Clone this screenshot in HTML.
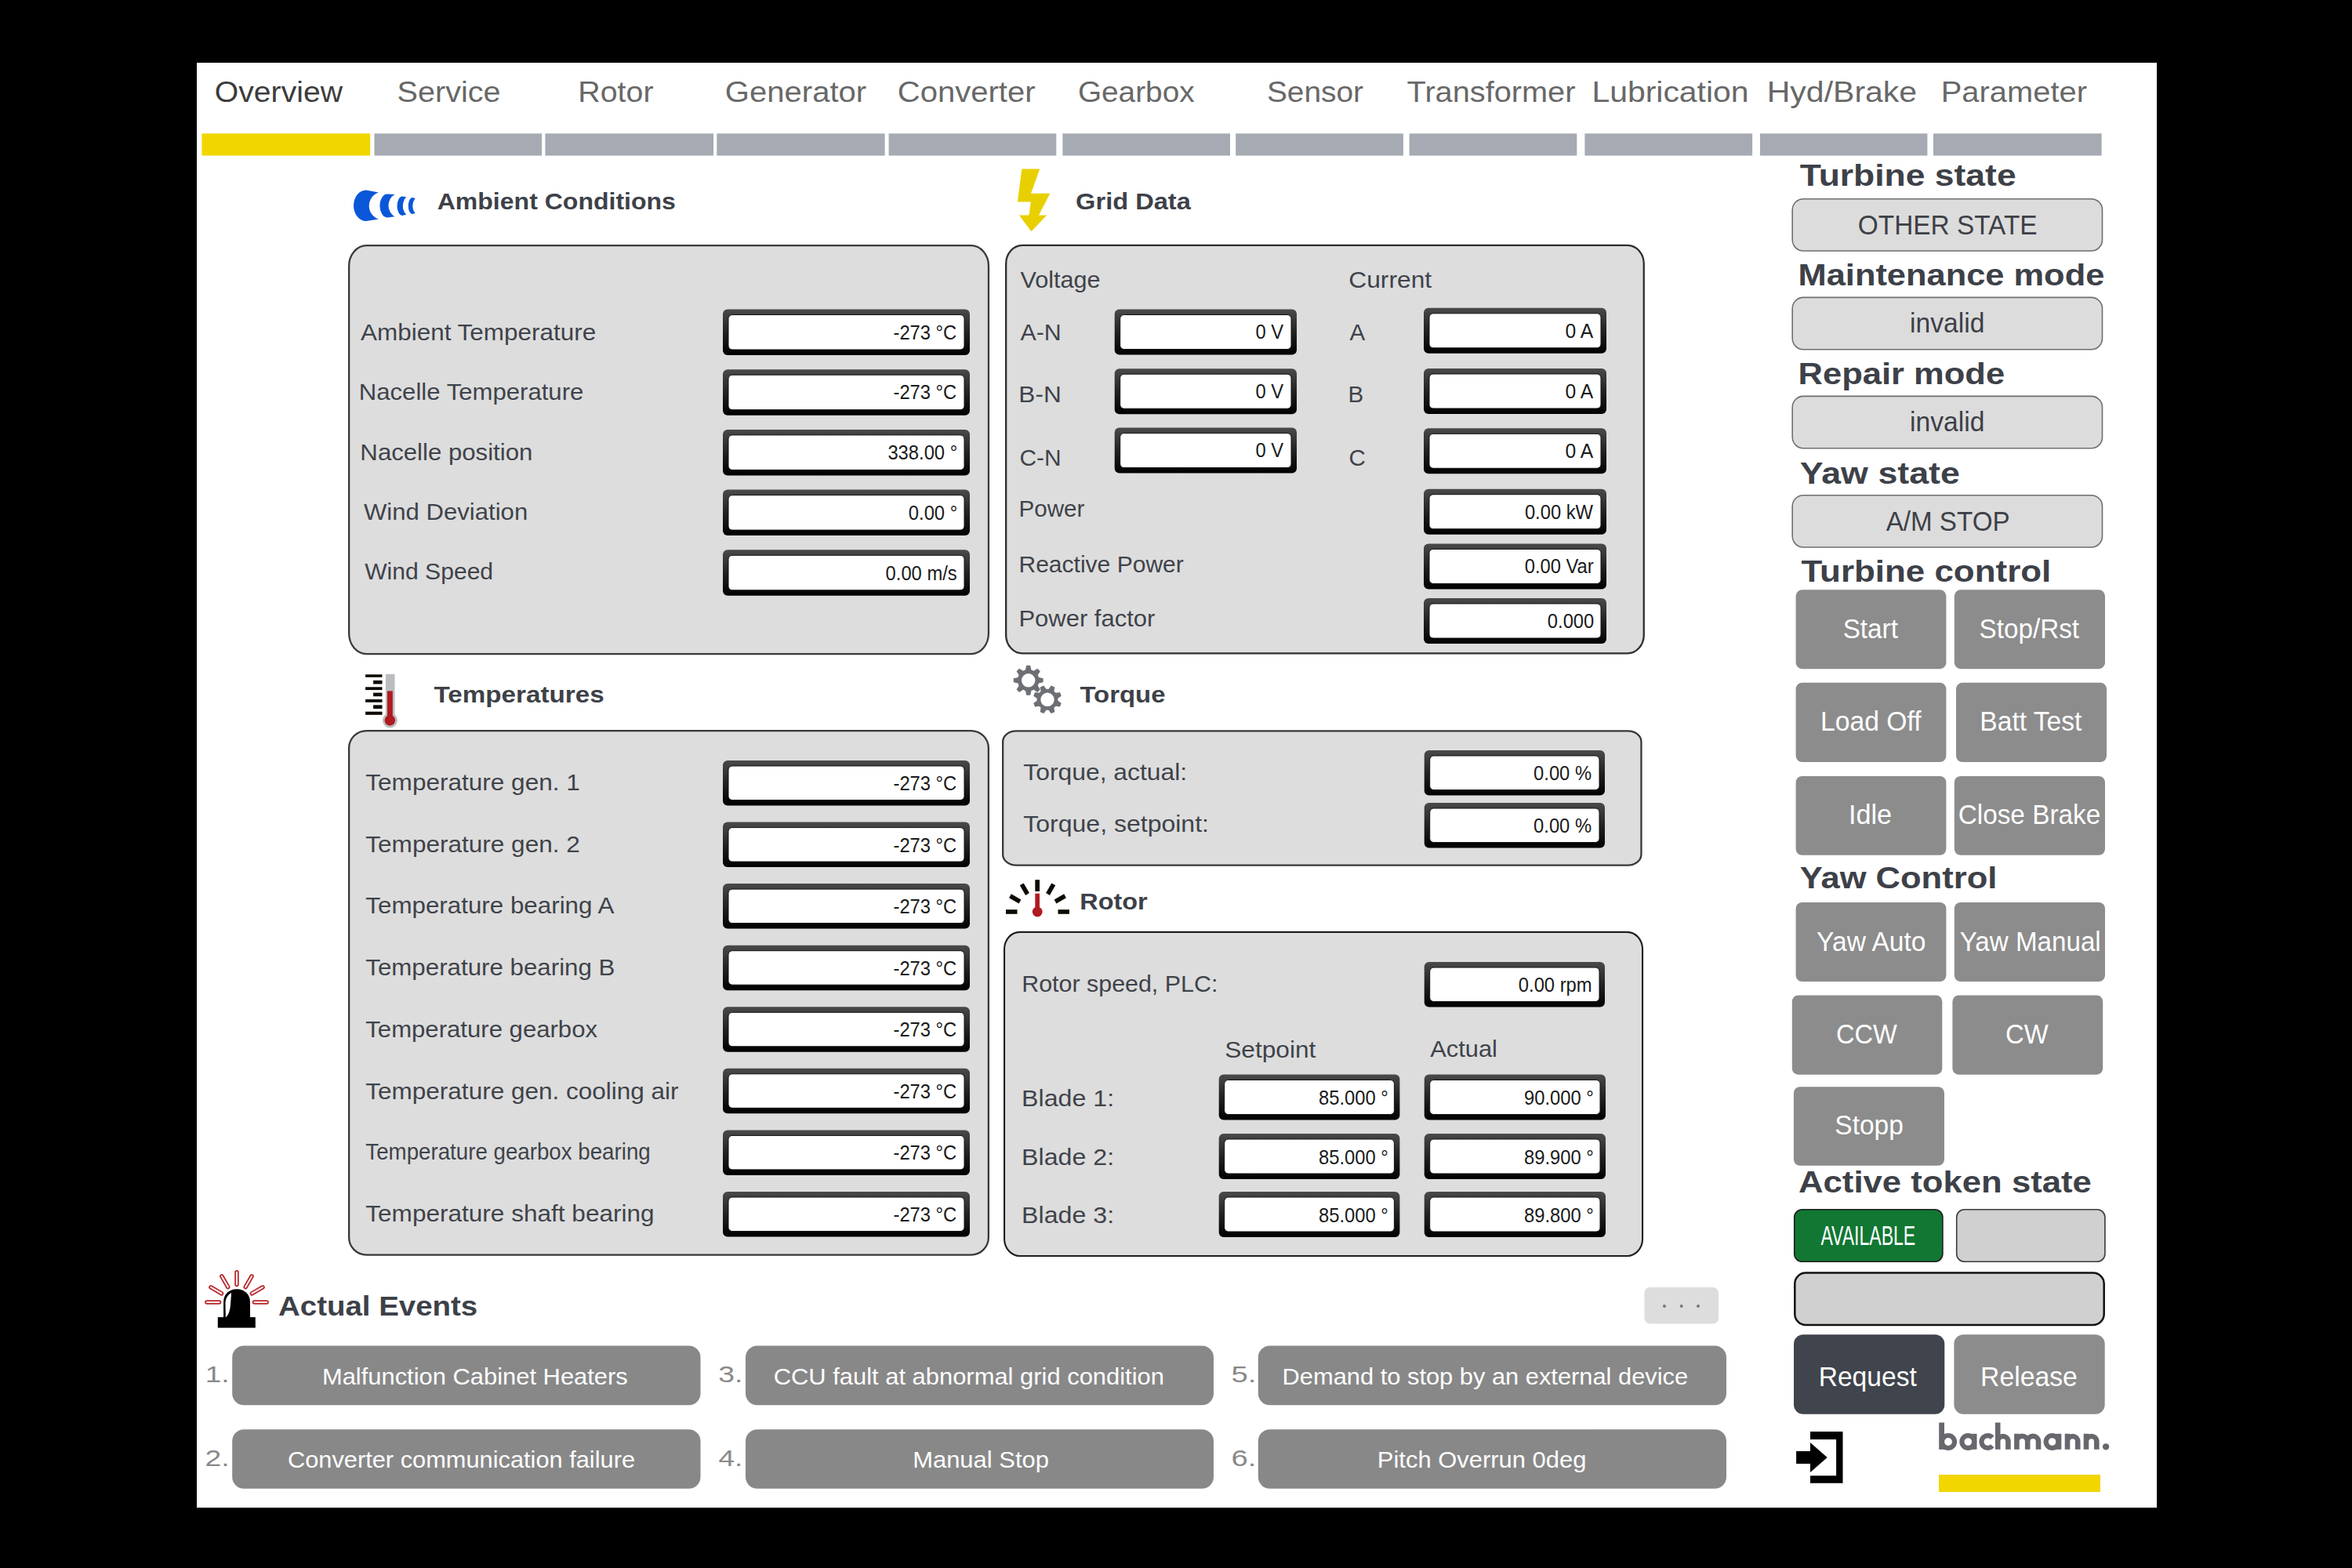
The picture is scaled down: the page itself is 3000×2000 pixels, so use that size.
<!DOCTYPE html>
<html><head><meta charset="utf-8"><style>
html,body{margin:0;padding:0;background:#000;width:3000px;height:2000px;overflow:hidden}
svg{display:block}
text{font-family:"Liberation Sans", sans-serif}
</style></head><body>
<svg width="3000" height="2000" viewBox="0 0 3000 2000">
<defs><linearGradient id="vb" x1="0" y1="0" x2="0" y2="1"><stop offset="0" stop-color="#4a4a4a"/><stop offset="0.5" stop-color="#222"/><stop offset="1" stop-color="#000"/></linearGradient></defs>
<rect x="251" y="80" width="2500" height="1843" fill="#fff"/>
<rect x="257.4" y="170.3" width="214.8" height="28.2" fill="#f2d600"/>
<rect x="477.5" y="170.3" width="213.6" height="28.2" fill="#a6aab2"/>
<rect x="695.4" y="170.3" width="214.6" height="28.2" fill="#a6aab2"/>
<rect x="914.3" y="170.3" width="214.3" height="28.2" fill="#a6aab2"/>
<rect x="1133.6" y="170.3" width="213.7" height="28.2" fill="#a6aab2"/>
<rect x="1355.4" y="170.3" width="213.6" height="28.2" fill="#a6aab2"/>
<rect x="1576.2" y="170.3" width="213.7" height="28.2" fill="#a6aab2"/>
<rect x="1797.6" y="170.3" width="213.7" height="28.2" fill="#a6aab2"/>
<rect x="2021.4" y="170.3" width="213.7" height="28.2" fill="#a6aab2"/>
<rect x="2245.0" y="170.3" width="213.4" height="28.2" fill="#a6aab2"/>
<rect x="2466.0" y="170.3" width="214.6" height="28.2" fill="#a6aab2"/>
<rect x="445.15" y="313.15" width="815.80" height="520.90" rx="22.5" ry="26" fill="#dddddd" stroke="#3a3a3a" stroke-width="2.3"/>
<rect x="1283.15" y="312.95" width="813.60" height="520.50" rx="21" ry="23.5" fill="#dddddd" stroke="#2e2e2e" stroke-width="2.3"/>
<rect x="445.15" y="932.05" width="815.70" height="668.50" rx="22.3" ry="22" fill="#dddddd" stroke="#383838" stroke-width="2.3"/>
<rect x="1279.15" y="932.40" width="814.30" height="171.15" rx="17" ry="13.5" fill="#dddddd" stroke="#383838" stroke-width="2.3"/>
<rect x="1281.05" y="1188.85" width="814.00" height="413.10" rx="19.5" ry="22" fill="#dddddd" stroke="#1e1e1e" stroke-width="2.1"/>
<rect x="922.0" y="394.5" width="315.0" height="58.5" rx="6" fill="url(#vb)"/><rect x="929.0" y="401.5" width="301.0" height="44.5" rx="5" fill="#fff" stroke="#111" stroke-width="1"/>
<rect x="922.0" y="471.2" width="315.0" height="58.5" rx="6" fill="url(#vb)"/><rect x="929.0" y="478.2" width="301.0" height="44.5" rx="5" fill="#fff" stroke="#111" stroke-width="1"/>
<rect x="922.0" y="547.9" width="315.0" height="58.5" rx="6" fill="url(#vb)"/><rect x="929.0" y="554.9" width="301.0" height="44.5" rx="5" fill="#fff" stroke="#111" stroke-width="1"/>
<rect x="922.0" y="624.6" width="315.0" height="58.5" rx="6" fill="url(#vb)"/><rect x="929.0" y="631.6" width="301.0" height="44.5" rx="5" fill="#fff" stroke="#111" stroke-width="1"/>
<rect x="922.0" y="701.3" width="315.0" height="58.5" rx="6" fill="url(#vb)"/><rect x="929.0" y="708.3" width="301.0" height="44.5" rx="5" fill="#fff" stroke="#111" stroke-width="1"/>
<rect x="1421.7" y="394.5" width="232.3" height="58.0" rx="6" fill="url(#vb)"/><rect x="1428.7" y="401.5" width="218.3" height="44.0" rx="5" fill="#fff" stroke="#111" stroke-width="1"/>
<rect x="1421.7" y="470.2" width="232.3" height="58.0" rx="6" fill="url(#vb)"/><rect x="1428.7" y="477.2" width="218.3" height="44.0" rx="5" fill="#fff" stroke="#111" stroke-width="1"/>
<rect x="1421.7" y="545.6" width="232.3" height="58.0" rx="6" fill="url(#vb)"/><rect x="1428.7" y="552.6" width="218.3" height="44.0" rx="5" fill="#fff" stroke="#111" stroke-width="1"/>
<rect x="1816.0" y="392.8" width="233.0" height="58.0" rx="6" fill="url(#vb)"/><rect x="1823.0" y="399.8" width="219.0" height="44.0" rx="5" fill="#fff" stroke="#111" stroke-width="1"/>
<rect x="1816.0" y="470.0" width="233.0" height="58.0" rx="6" fill="url(#vb)"/><rect x="1823.0" y="477.0" width="219.0" height="44.0" rx="5" fill="#fff" stroke="#111" stroke-width="1"/>
<rect x="1816.0" y="546.3" width="233.0" height="58.0" rx="6" fill="url(#vb)"/><rect x="1823.0" y="553.3" width="219.0" height="44.0" rx="5" fill="#fff" stroke="#111" stroke-width="1"/>
<rect x="1816.0" y="623.7" width="233.0" height="58.0" rx="6" fill="url(#vb)"/><rect x="1823.0" y="630.7" width="219.0" height="44.0" rx="5" fill="#fff" stroke="#111" stroke-width="1"/>
<rect x="1816.0" y="693.4" width="233.0" height="58.0" rx="6" fill="url(#vb)"/><rect x="1823.0" y="700.4" width="219.0" height="44.0" rx="5" fill="#fff" stroke="#111" stroke-width="1"/>
<rect x="1816.0" y="763.0" width="233.0" height="58.0" rx="6" fill="url(#vb)"/><rect x="1823.0" y="770.0" width="219.0" height="44.0" rx="5" fill="#fff" stroke="#111" stroke-width="1"/>
<rect x="922.0" y="970.0" width="315.0" height="57.5" rx="6" fill="url(#vb)"/><rect x="929.0" y="977.0" width="301.0" height="43.5" rx="5" fill="#fff" stroke="#111" stroke-width="1"/>
<rect x="922.0" y="1048.6" width="315.0" height="57.5" rx="6" fill="url(#vb)"/><rect x="929.0" y="1055.6" width="301.0" height="43.5" rx="5" fill="#fff" stroke="#111" stroke-width="1"/>
<rect x="922.0" y="1127.1" width="315.0" height="57.5" rx="6" fill="url(#vb)"/><rect x="929.0" y="1134.1" width="301.0" height="43.5" rx="5" fill="#fff" stroke="#111" stroke-width="1"/>
<rect x="922.0" y="1205.7" width="315.0" height="57.5" rx="6" fill="url(#vb)"/><rect x="929.0" y="1212.7" width="301.0" height="43.5" rx="5" fill="#fff" stroke="#111" stroke-width="1"/>
<rect x="922.0" y="1284.3" width="315.0" height="57.5" rx="6" fill="url(#vb)"/><rect x="929.0" y="1291.3" width="301.0" height="43.5" rx="5" fill="#fff" stroke="#111" stroke-width="1"/>
<rect x="922.0" y="1362.8" width="315.0" height="57.5" rx="6" fill="url(#vb)"/><rect x="929.0" y="1369.8" width="301.0" height="43.5" rx="5" fill="#fff" stroke="#111" stroke-width="1"/>
<rect x="922.0" y="1441.4" width="315.0" height="57.5" rx="6" fill="url(#vb)"/><rect x="929.0" y="1448.4" width="301.0" height="43.5" rx="5" fill="#fff" stroke="#111" stroke-width="1"/>
<rect x="922.0" y="1520.0" width="315.0" height="57.5" rx="6" fill="url(#vb)"/><rect x="929.0" y="1527.0" width="301.0" height="43.5" rx="5" fill="#fff" stroke="#111" stroke-width="1"/>
<rect x="1816.7" y="957.0" width="230.3" height="57.5" rx="6" fill="url(#vb)"/><rect x="1823.7" y="964.0" width="216.3" height="43.5" rx="5" fill="#fff" stroke="#111" stroke-width="1"/>
<rect x="1816.7" y="1024.0" width="230.3" height="57.5" rx="6" fill="url(#vb)"/><rect x="1823.7" y="1031.0" width="216.3" height="43.5" rx="5" fill="#fff" stroke="#111" stroke-width="1"/>
<rect x="1816.7" y="1227.0" width="230.3" height="57.5" rx="6" fill="url(#vb)"/><rect x="1823.7" y="1234.0" width="216.3" height="43.5" rx="5" fill="#fff" stroke="#111" stroke-width="1"/>
<rect x="1554.7" y="1370.5" width="230.7" height="58.0" rx="6" fill="url(#vb)"/><rect x="1561.7" y="1377.5" width="216.7" height="44.0" rx="5" fill="#fff" stroke="#111" stroke-width="1"/>
<rect x="1816.7" y="1370.5" width="231.3" height="58.0" rx="6" fill="url(#vb)"/><rect x="1823.7" y="1377.5" width="217.3" height="44.0" rx="5" fill="#fff" stroke="#111" stroke-width="1"/>
<rect x="1554.7" y="1446.0" width="230.7" height="58.0" rx="6" fill="url(#vb)"/><rect x="1561.7" y="1453.0" width="216.7" height="44.0" rx="5" fill="#fff" stroke="#111" stroke-width="1"/>
<rect x="1816.7" y="1446.0" width="231.3" height="58.0" rx="6" fill="url(#vb)"/><rect x="1823.7" y="1453.0" width="217.3" height="44.0" rx="5" fill="#fff" stroke="#111" stroke-width="1"/>
<rect x="1554.7" y="1520.0" width="230.7" height="58.0" rx="6" fill="url(#vb)"/><rect x="1561.7" y="1527.0" width="216.7" height="44.0" rx="5" fill="#fff" stroke="#111" stroke-width="1"/>
<rect x="1816.7" y="1520.0" width="231.3" height="58.0" rx="6" fill="url(#vb)"/><rect x="1823.7" y="1527.0" width="217.3" height="44.0" rx="5" fill="#fff" stroke="#111" stroke-width="1"/>
<rect x="2286.2" y="253.7" width="395.3" height="66.3" rx="14" fill="#dcdcdc" stroke="#6e6e6e" stroke-width="1.6"/>
<rect x="2286.2" y="379.4" width="395.3" height="66.3" rx="14" fill="#dcdcdc" stroke="#6e6e6e" stroke-width="1.6"/>
<rect x="2286.2" y="505.4" width="395.3" height="66.3" rx="14" fill="#dcdcdc" stroke="#6e6e6e" stroke-width="1.6"/>
<rect x="2286.2" y="631.7" width="395.3" height="66.3" rx="14" fill="#dcdcdc" stroke="#6e6e6e" stroke-width="1.6"/>
<rect x="2290.6" y="752.3" width="191.8" height="100.9" rx="8" fill="#8c8c8c"/>
<rect x="2492.8" y="752.3" width="192.2" height="100.9" rx="8" fill="#8c8c8c"/>
<rect x="2290.6" y="870.8" width="191.8" height="101.2" rx="8" fill="#8c8c8c"/>
<rect x="2495.0" y="870.8" width="192.0" height="101.2" rx="8" fill="#8c8c8c"/>
<rect x="2290.6" y="990.0" width="191.8" height="100.8" rx="8" fill="#8c8c8c"/>
<rect x="2492.8" y="990.0" width="192.2" height="100.8" rx="8" fill="#8c8c8c"/>
<rect x="2290.6" y="1151.0" width="191.8" height="101.0" rx="8" fill="#8c8c8c"/>
<rect x="2492.8" y="1151.0" width="192.2" height="101.0" rx="8" fill="#8c8c8c"/>
<rect x="2285.8" y="1269.5" width="191.5" height="101.2" rx="8" fill="#8c8c8c"/>
<rect x="2490.4" y="1269.5" width="191.8" height="101.2" rx="8" fill="#8c8c8c"/>
<rect x="2287.9" y="1386.2" width="192.1" height="100.6" rx="8" fill="#8c8c8c"/>
<rect x="2288.7" y="1542.7" width="189.2" height="66.6" rx="10" fill="#117733" stroke="#1e1e1e" stroke-width="1.6"/>
<rect x="2495.7" y="1542.7" width="189.2" height="66.6" rx="10" fill="#d0d0d0" stroke="#3a3a3a" stroke-width="1.6"/>
<rect x="2289.3" y="1623.5" width="394.4" height="66.4" rx="14" fill="#d0d0d0" stroke="#111" stroke-width="2.5"/>
<rect x="2288.0" y="1702.3" width="192.3" height="101.5" rx="12" fill="#40444c"/>
<rect x="2492.4" y="1702.3" width="192.3" height="101.5" rx="12" fill="#8c8c8c"/>
<rect x="2097.5" y="1642" width="94.5" height="46.6" rx="7" fill="#dddddd"/>
<circle cx="2123" cy="1666" r="2" fill="#777"/>
<circle cx="2144.7" cy="1666" r="2" fill="#777"/>
<circle cx="2166" cy="1666" r="2" fill="#777"/>
<rect x="296.2" y="1716.4" width="597.3" height="75.9" rx="15" fill="#888888"/>
<rect x="296.2" y="1823.2" width="597.3" height="75.6" rx="15" fill="#888888"/>
<rect x="951.0" y="1716.4" width="597.0" height="75.9" rx="15" fill="#888888"/>
<rect x="951.0" y="1823.2" width="597.0" height="75.6" rx="15" fill="#888888"/>
<rect x="1604.8" y="1716.4" width="597.2" height="75.9" rx="15" fill="#888888"/>
<rect x="1604.8" y="1823.2" width="597.2" height="75.6" rx="15" fill="#888888"/>
<rect x="2473.2" y="1814.5" width="6.8" height="34.3" fill="#68676e"/><circle cx="2485" cy="1839" r="8.0" fill="none" stroke="#68676e" stroke-width="6.2"/><circle cx="2510.3" cy="1839" r="7.9" fill="none" stroke="#68676e" stroke-width="6.2"/><rect x="2515" y="1828.8" width="6.5" height="20.0" fill="#68676e"/><path d="M2541.27,1833.71 A7.9,7.9 0 1 0 2541.27,1844.29" fill="none" stroke="#68676e" stroke-width="6.2"/><path d="M2548.2,1848.8 V1814.5 M2548.2,1848.8 V1838.6 A6.600000000000136,6.600000000000136 0 0 1 2561.4,1838.6 V1848.8 " fill="none" stroke="#68676e" stroke-width="6.6"/><path d="M2572.4,1848.8 V1828.8 M2572.4,1848.8 V1838.6 A6.899999999999864,6.899999999999864 0 0 1 2586.2,1838.6 V1848.8  M2586.2,1848.8 V1838.6 A6.900000000000091,6.900000000000091 0 0 1 2600,1838.6 V1848.8 " fill="none" stroke="#68676e" stroke-width="6.6"/><circle cx="2617.6" cy="1839" r="7.9" fill="none" stroke="#68676e" stroke-width="6.2"/><rect x="2622.5" y="1828.8" width="6.8" height="20.0" fill="#68676e"/><path d="M2637,1848.8 V1828.8 M2637,1848.8 V1838.6 A6.599999999999909,6.599999999999909 0 0 1 2650.2,1838.6 V1848.8 " fill="none" stroke="#68676e" stroke-width="6.6"/><path d="M2661,1848.8 V1828.8 M2661,1848.8 V1838.6 A6.650000000000091,6.650000000000091 0 0 1 2674.3,1838.6 V1848.8 " fill="none" stroke="#68676e" stroke-width="6.6"/><circle cx="2686.1" cy="1845.3" r="4.1" fill="#68676e"/>
<rect x="2473" y="1881" width="206" height="22" fill="#f2d600"/>
<path d="M483,245.5 L467,242.5 A16,19.75 0 0 0 467,282 L483,279.5 A17.9,17.9 0 0 1 483,245.5 Z M503.4,248.1 L494,247.6 A9.6,14.899999999999991 0 0 0 494,277.4 L503.4,276.3 A16.5,16.5 0 0 1 503.4,248.1 Z M518.2,251.3 L513.1,250.6 A6.6,12.149999999999991 0 0 0 513.1,274.9 L518.2,273.8 A16.6,16.6 0 0 1 518.2,251.3 Z M529.7,253 L525.9,252.1 A5.1,10.450000000000003 0 0 0 525.9,273 L529.7,272.1 A15.1,15.1 0 0 1 529.7,253 Z " fill="#0b57d9"/>
<polygon points="1303.3,215.5 1326.3,215.5 1315,246.8 1339.3,246.8 1325,274.5 1335.2,274.5 1315.4,295.3 1299.9,274.5 1312.5,274.5 1314.8,257.6 1297.9,257.6" fill="#e8d000"/>
<rect x="466.1" y="860.3" width="21.4" height="3.5" fill="#0d0a00"/><rect x="476.1" y="867.9" width="11.4" height="4.6" fill="#0d0a00"/><rect x="466.1" y="876.3" width="21.4" height="3.8" fill="#0d0a00"/><rect x="476.1" y="883.6" width="11.4" height="4.6" fill="#0d0a00"/><rect x="466.1" y="892" width="21.4" height="3.8" fill="#0d0a00"/><rect x="476.1" y="899.3" width="11.4" height="4.7" fill="#0d0a00"/><rect x="466.1" y="907.7" width="21.4" height="4.1" fill="#0d0a00"/><rect x="491.9" y="859.8" width="11.6" height="58" fill="#bbbdc0"/><circle cx="497.5" cy="918.8" r="9.5" fill="#bbbdc0"/><rect x="494" y="881.4" width="6.8" height="38" fill="#b01a20"/><circle cx="497.4" cy="918.8" r="6.8" fill="#b01a20"/>
<path fill-rule="evenodd" fill="#6d6f74" d="M1306.42,855.05 L1307.95,854.52 L1309.20,848.86 L1314.20,848.86 L1315.45,854.52 L1316.98,855.05 L1318.44,855.76 L1323.32,852.64 L1326.86,856.18 L1323.74,861.06 L1324.45,862.52 L1324.98,864.05 L1330.64,865.30 L1330.64,870.30 L1324.98,871.55 L1324.45,873.08 L1323.74,874.54 L1326.86,879.42 L1323.32,882.96 L1318.44,879.84 L1316.98,880.55 L1315.45,881.08 L1314.20,886.74 L1309.20,886.74 L1307.95,881.08 L1306.42,880.55 L1304.96,879.84 L1300.08,882.96 L1296.54,879.42 L1299.66,874.54 L1298.95,873.08 L1298.42,871.55 L1292.76,870.30 L1292.76,865.30 L1298.42,864.05 L1298.95,862.52 L1299.66,861.06 L1296.54,856.18 L1300.08,852.64 L1304.96,855.76 Z M1320.40,867.80 A8.7,8.7 0 1,0 1303.00,867.80 A8.7,8.7 0 1,0 1320.40,867.80 Z M1336.00,878.80 L1337.50,878.88 L1340.67,874.50 L1345.29,876.41 L1344.43,881.75 L1345.55,882.75 L1346.55,883.87 L1351.89,883.01 L1353.80,887.63 L1349.42,890.80 L1349.50,892.30 L1349.42,893.80 L1353.80,896.97 L1351.89,901.59 L1346.55,900.73 L1345.55,901.85 L1344.43,902.85 L1345.29,908.19 L1340.67,910.10 L1337.50,905.72 L1336.00,905.80 L1334.50,905.72 L1331.33,910.10 L1326.71,908.19 L1327.57,902.85 L1326.45,901.85 L1325.45,900.73 L1320.11,901.59 L1318.20,896.97 L1322.58,893.80 L1322.50,892.30 L1322.58,890.80 L1318.20,887.63 L1320.11,883.01 L1325.45,883.87 L1326.45,882.75 L1327.57,881.75 L1326.71,876.41 L1331.33,874.50 L1334.50,878.88 Z M1344.70,892.30 A8.7,8.7 0 1,0 1327.30,892.30 A8.7,8.7 0 1,0 1344.70,892.30 Z"/>
<line x1="1297.50" y1="1163.00" x2="1283.00" y2="1163.00" stroke="#0d0a00" stroke-width="5.6"/><line x1="1300.98" y1="1150.00" x2="1288.43" y2="1142.75" stroke="#0d0a00" stroke-width="5.6"/><line x1="1310.50" y1="1140.48" x2="1303.25" y2="1127.93" stroke="#0d0a00" stroke-width="5.6"/><line x1="1336.50" y1="1140.48" x2="1343.75" y2="1127.93" stroke="#0d0a00" stroke-width="5.6"/><line x1="1346.02" y1="1150.00" x2="1358.57" y2="1142.75" stroke="#0d0a00" stroke-width="5.6"/><line x1="1349.50" y1="1163.00" x2="1364.00" y2="1163.00" stroke="#0d0a00" stroke-width="5.6"/><rect x="1320.3" y="1122.2" width="5.7" height="14.7" fill="#0d0a00"/><rect x="1320.3" y="1139.7" width="5.7" height="22" fill="#b01a20"/><circle cx="1323.2" cy="1163" r="6.4" fill="#b01a20"/>
<rect x="261.95" y="1659.10" width="19.5" height="3.8" rx="1.9" fill="#f8eaea" stroke="#b9262c" stroke-width="1.7" transform="rotate(-180 271.70 1661.00)"/><rect x="266.01" y="1643.95" width="19.5" height="3.8" rx="1.9" fill="#f8eaea" stroke="#b9262c" stroke-width="1.7" transform="rotate(-150 275.76 1645.85)"/><rect x="277.10" y="1632.86" width="19.5" height="3.8" rx="1.9" fill="#f8eaea" stroke="#b9262c" stroke-width="1.7" transform="rotate(-120 286.85 1634.76)"/><rect x="292.25" y="1628.80" width="19.5" height="3.8" rx="1.9" fill="#f8eaea" stroke="#b9262c" stroke-width="1.7" transform="rotate(-90 302.00 1630.70)"/><rect x="307.40" y="1632.86" width="19.5" height="3.8" rx="1.9" fill="#f8eaea" stroke="#b9262c" stroke-width="1.7" transform="rotate(-60 317.15 1634.76)"/><rect x="318.49" y="1643.95" width="19.5" height="3.8" rx="1.9" fill="#f8eaea" stroke="#b9262c" stroke-width="1.7" transform="rotate(-30 328.24 1645.85)"/><rect x="322.55" y="1659.10" width="19.5" height="3.8" rx="1.9" fill="#f8eaea" stroke="#b9262c" stroke-width="1.7" transform="rotate(0 332.30 1661.00)"/><path d="M285.1,1681 L285.1,1661 C285.1,1651 292,1644.3 302,1644.3 C312,1644.3 319,1651 319,1661 L319,1681 Z" fill="#000"/><path d="M295,1649 C290,1652 287.5,1657 287.5,1662 C287.5,1670 288,1676 287.8,1680.5 C292,1677 293.5,1671 294,1664 C294.5,1657 295,1652 295,1649 Z" fill="#fff"/><rect x="277.8" y="1680.1" width="48" height="13.5" fill="#000"/>
<path d="M2309,1826.1 H2350.5 V1891.7 H2309 V1882.2 H2342.1 V1835.9 H2309 Z" fill="#000"/><path d="M2291.1,1851 H2309 V1840 L2330.7,1859 L2309,1877.9 V1867 H2291.1 Z" fill="#000"/>
<text x="273.81" y="129.90" font-size="36" font-weight="normal" fill="#3c3c3c" textLength="163.20" lengthAdjust="spacingAndGlyphs">Overview</text>
<text x="506.60" y="129.90" font-size="36" font-weight="normal" fill="#686868" textLength="131.92" lengthAdjust="spacingAndGlyphs">Service</text>
<text x="737.32" y="129.90" font-size="36" font-weight="normal" fill="#686868" textLength="96.17" lengthAdjust="spacingAndGlyphs">Rotor</text>
<text x="924.89" y="129.90" font-size="36" font-weight="normal" fill="#686868" textLength="180.30" lengthAdjust="spacingAndGlyphs">Generator</text>
<text x="1144.89" y="129.90" font-size="36" font-weight="normal" fill="#686868" textLength="175.60" lengthAdjust="spacingAndGlyphs">Converter</text>
<text x="1374.92" y="129.90" font-size="36" font-weight="normal" fill="#686868" textLength="148.68" lengthAdjust="spacingAndGlyphs">Gearbox</text>
<text x="1615.92" y="129.90" font-size="36" font-weight="normal" fill="#686868" textLength="123.07" lengthAdjust="spacingAndGlyphs">Sensor</text>
<text x="1794.60" y="129.90" font-size="36" font-weight="normal" fill="#686868" textLength="214.79" lengthAdjust="spacingAndGlyphs">Transformer</text>
<text x="2030.43" y="129.90" font-size="36" font-weight="normal" fill="#686868" textLength="200.17" lengthAdjust="spacingAndGlyphs">Lubrication</text>
<text x="2253.72" y="129.90" font-size="36" font-weight="normal" fill="#686868" textLength="191.44" lengthAdjust="spacingAndGlyphs">Hyd/Brake</text>
<text x="2475.78" y="129.90" font-size="36" font-weight="normal" fill="#686868" textLength="186.20" lengthAdjust="spacingAndGlyphs">Parameter</text>
<text x="460.00" y="434.40" font-size="29.5" font-weight="normal" fill="#3f434a" textLength="300.23" lengthAdjust="spacingAndGlyphs">Ambient Temperature</text>
<text x="457.79" y="509.90" font-size="29.5" font-weight="normal" fill="#3f434a" textLength="286.53" lengthAdjust="spacingAndGlyphs">Nacelle Temperature</text>
<text x="459.39" y="586.50" font-size="29.5" font-weight="normal" fill="#3f434a" textLength="220.00" lengthAdjust="spacingAndGlyphs">Nacelle position</text>
<text x="464.00" y="663.20" font-size="29.5" font-weight="normal" fill="#3f434a" textLength="209.18" lengthAdjust="spacingAndGlyphs">Wind Deviation</text>
<text x="465.20" y="739.10" font-size="29.5" font-weight="normal" fill="#3f434a" textLength="163.93" lengthAdjust="spacingAndGlyphs">Wind Speed</text>
<text x="1139.47" y="432.70" font-size="25" font-weight="normal" fill="#1a1a1a" textLength="80.78" lengthAdjust="spacingAndGlyphs">-273 °C</text>
<text x="1139.47" y="509.40" font-size="25" font-weight="normal" fill="#1a1a1a" textLength="80.78" lengthAdjust="spacingAndGlyphs">-273 °C</text>
<text x="1132.41" y="586.10" font-size="25" font-weight="normal" fill="#1a1a1a" textLength="88.74" lengthAdjust="spacingAndGlyphs">338.00 °</text>
<text x="1158.83" y="662.80" font-size="25" font-weight="normal" fill="#1a1a1a" textLength="62.32" lengthAdjust="spacingAndGlyphs">0.00 °</text>
<text x="1129.59" y="739.50" font-size="25" font-weight="normal" fill="#1a1a1a" textLength="91.08" lengthAdjust="spacingAndGlyphs">0.00 m/s</text>
<text x="1301.50" y="366.90" font-size="29.5" font-weight="normal" fill="#3f434a" textLength="102.02" lengthAdjust="spacingAndGlyphs">Voltage</text>
<text x="1720.32" y="366.90" font-size="29.5" font-weight="normal" fill="#3f434a" textLength="105.79" lengthAdjust="spacingAndGlyphs">Current</text>
<text x="1301.50" y="434.40" font-size="29.5" font-weight="normal" fill="#3f434a" textLength="52.17" lengthAdjust="spacingAndGlyphs">A-N</text>
<text x="1299.36" y="512.90" font-size="29.5" font-weight="normal" fill="#3f434a" textLength="54.41" lengthAdjust="spacingAndGlyphs">B-N</text>
<text x="1300.49" y="593.60" font-size="29.5" font-weight="normal" fill="#3f434a" textLength="53.15" lengthAdjust="spacingAndGlyphs">C-N</text>
<text x="1721.40" y="434.40" font-size="29.5" font-weight="normal" fill="#3f434a">A</text>
<text x="1719.40" y="512.90" font-size="29.5" font-weight="normal" fill="#3f434a">B</text>
<text x="1720.40" y="593.60" font-size="29.5" font-weight="normal" fill="#3f434a">C</text>
<text x="1299.49" y="658.90" font-size="29.5" font-weight="normal" fill="#3f434a" textLength="83.83" lengthAdjust="spacingAndGlyphs">Power</text>
<text x="1299.46" y="729.60" font-size="29.5" font-weight="normal" fill="#3f434a" textLength="210.36" lengthAdjust="spacingAndGlyphs">Reactive Power</text>
<text x="1299.40" y="798.90" font-size="29.5" font-weight="normal" fill="#3f434a" textLength="173.92" lengthAdjust="spacingAndGlyphs">Power factor</text>
<text x="1601.44" y="432.10" font-size="25" font-weight="normal" fill="#1a1a1a" textLength="35.65" lengthAdjust="spacingAndGlyphs">0 V</text>
<text x="1601.44" y="507.80" font-size="25" font-weight="normal" fill="#1a1a1a" textLength="35.65" lengthAdjust="spacingAndGlyphs">0 V</text>
<text x="1601.44" y="583.20" font-size="25" font-weight="normal" fill="#1a1a1a" textLength="35.65" lengthAdjust="spacingAndGlyphs">0 V</text>
<text x="1996.44" y="430.80" font-size="25" font-weight="normal" fill="#1a1a1a" textLength="35.65" lengthAdjust="spacingAndGlyphs">0 A</text>
<text x="1996.44" y="508.00" font-size="25" font-weight="normal" fill="#1a1a1a" textLength="35.65" lengthAdjust="spacingAndGlyphs">0 A</text>
<text x="1996.44" y="584.30" font-size="25" font-weight="normal" fill="#1a1a1a" textLength="35.65" lengthAdjust="spacingAndGlyphs">0 A</text>
<text x="1944.90" y="661.70" font-size="25" font-weight="normal" fill="#1a1a1a" textLength="87.11" lengthAdjust="spacingAndGlyphs">0.00 kW</text>
<text x="1944.69" y="731.40" font-size="25" font-weight="normal" fill="#1a1a1a" textLength="88.02" lengthAdjust="spacingAndGlyphs">0.00 Var</text>
<text x="1973.83" y="801.00" font-size="25" font-weight="normal" fill="#1a1a1a" textLength="59.43" lengthAdjust="spacingAndGlyphs">0.000</text>
<text x="466.30" y="1007.70" font-size="29.5" font-weight="normal" fill="#3f434a" textLength="273.50" lengthAdjust="spacingAndGlyphs">Temperature gen. 1</text>
<text x="466.30" y="1086.90" font-size="29.5" font-weight="normal" fill="#3f434a" textLength="273.50" lengthAdjust="spacingAndGlyphs">Temperature gen. 2</text>
<text x="466.30" y="1164.90" font-size="29.5" font-weight="normal" fill="#3f434a" textLength="317.06" lengthAdjust="spacingAndGlyphs">Temperature bearing A</text>
<text x="466.30" y="1243.50" font-size="29.5" font-weight="normal" fill="#3f434a" textLength="318.12" lengthAdjust="spacingAndGlyphs">Temperature bearing B</text>
<text x="466.30" y="1322.60" font-size="29.5" font-weight="normal" fill="#3f434a" textLength="295.74" lengthAdjust="spacingAndGlyphs">Temperature gearbox</text>
<text x="466.30" y="1401.70" font-size="29.5" font-weight="normal" fill="#3f434a" textLength="399.31" lengthAdjust="spacingAndGlyphs">Temperature gen. cooling air</text>
<text x="466.30" y="1479.40" font-size="30.4" font-weight="normal" fill="#3f434a" textLength="363.43" lengthAdjust="spacingAndGlyphs">Temperature gearbox bearing</text>
<text x="466.30" y="1557.90" font-size="29.5" font-weight="normal" fill="#3f434a" textLength="368.30" lengthAdjust="spacingAndGlyphs">Temperature shaft bearing</text>
<text x="1139.47" y="1008.00" font-size="25" font-weight="normal" fill="#1a1a1a" textLength="80.78" lengthAdjust="spacingAndGlyphs">-273 °C</text>
<text x="1139.47" y="1086.57" font-size="25" font-weight="normal" fill="#1a1a1a" textLength="80.78" lengthAdjust="spacingAndGlyphs">-273 °C</text>
<text x="1139.47" y="1165.14" font-size="25" font-weight="normal" fill="#1a1a1a" textLength="80.78" lengthAdjust="spacingAndGlyphs">-273 °C</text>
<text x="1139.47" y="1243.71" font-size="25" font-weight="normal" fill="#1a1a1a" textLength="80.78" lengthAdjust="spacingAndGlyphs">-273 °C</text>
<text x="1139.47" y="1322.28" font-size="25" font-weight="normal" fill="#1a1a1a" textLength="80.78" lengthAdjust="spacingAndGlyphs">-273 °C</text>
<text x="1139.47" y="1400.85" font-size="25" font-weight="normal" fill="#1a1a1a" textLength="80.78" lengthAdjust="spacingAndGlyphs">-273 °C</text>
<text x="1139.47" y="1479.42" font-size="25" font-weight="normal" fill="#1a1a1a" textLength="80.78" lengthAdjust="spacingAndGlyphs">-273 °C</text>
<text x="1139.47" y="1557.99" font-size="25" font-weight="normal" fill="#1a1a1a" textLength="80.78" lengthAdjust="spacingAndGlyphs">-273 °C</text>
<text x="1305.30" y="994.90" font-size="29.5" font-weight="normal" fill="#3f434a" textLength="208.87" lengthAdjust="spacingAndGlyphs">Torque, actual:</text>
<text x="1305.30" y="1060.60" font-size="29.5" font-weight="normal" fill="#3f434a" textLength="236.68" lengthAdjust="spacingAndGlyphs">Torque, setpoint:</text>
<text x="1956.08" y="995.00" font-size="25" font-weight="normal" fill="#1a1a1a" textLength="73.94" lengthAdjust="spacingAndGlyphs">0.00 %</text>
<text x="1956.08" y="1062.00" font-size="25" font-weight="normal" fill="#1a1a1a" textLength="73.94" lengthAdjust="spacingAndGlyphs">0.00 %</text>
<text x="1303.24" y="1264.70" font-size="29.5" font-weight="normal" fill="#3f434a" textLength="250.12" lengthAdjust="spacingAndGlyphs">Rotor speed, PLC:</text>
<text x="1936.86" y="1265.00" font-size="25" font-weight="normal" fill="#1a1a1a" textLength="93.72" lengthAdjust="spacingAndGlyphs">0.00 rpm</text>
<text x="1562.23" y="1348.90" font-size="29.5" font-weight="normal" fill="#3f434a" textLength="116.18" lengthAdjust="spacingAndGlyphs">Setpoint</text>
<text x="1824.20" y="1347.90" font-size="29.5" font-weight="normal" fill="#3f434a" textLength="85.72" lengthAdjust="spacingAndGlyphs">Actual</text>
<text x="1303.12" y="1410.90" font-size="29.5" font-weight="normal" fill="#3f434a" textLength="117.97" lengthAdjust="spacingAndGlyphs">Blade 1:</text>
<text x="1682.01" y="1409.00" font-size="25" font-weight="normal" fill="#1a1a1a" textLength="88.74" lengthAdjust="spacingAndGlyphs">85.000 °</text>
<text x="1944.01" y="1409.00" font-size="25" font-weight="normal" fill="#1a1a1a" textLength="88.74" lengthAdjust="spacingAndGlyphs">90.000 °</text>
<text x="1303.12" y="1486.40" font-size="29.5" font-weight="normal" fill="#3f434a" textLength="117.97" lengthAdjust="spacingAndGlyphs">Blade 2:</text>
<text x="1682.01" y="1484.50" font-size="25" font-weight="normal" fill="#1a1a1a" textLength="88.74" lengthAdjust="spacingAndGlyphs">85.000 °</text>
<text x="1944.01" y="1484.50" font-size="25" font-weight="normal" fill="#1a1a1a" textLength="88.74" lengthAdjust="spacingAndGlyphs">89.900 °</text>
<text x="1303.12" y="1560.40" font-size="29.5" font-weight="normal" fill="#3f434a" textLength="117.97" lengthAdjust="spacingAndGlyphs">Blade 3:</text>
<text x="1682.01" y="1558.50" font-size="25" font-weight="normal" fill="#1a1a1a" textLength="88.74" lengthAdjust="spacingAndGlyphs">85.000 °</text>
<text x="1944.01" y="1558.50" font-size="25" font-weight="normal" fill="#1a1a1a" textLength="88.74" lengthAdjust="spacingAndGlyphs">89.800 °</text>
<text x="557.70" y="267.00" font-size="30" font-weight="bold" fill="#3d4148" textLength="304.23" lengthAdjust="spacingAndGlyphs">Ambient Conditions</text>
<text x="1372.11" y="267.20" font-size="30" font-weight="bold" fill="#3d4148" textLength="146.74" lengthAdjust="spacingAndGlyphs">Grid Data</text>
<text x="553.40" y="895.50" font-size="30" font-weight="bold" fill="#3d4148" textLength="217.36" lengthAdjust="spacingAndGlyphs">Temperatures</text>
<text x="1377.40" y="895.50" font-size="30" font-weight="bold" fill="#3d4148" textLength="109.05" lengthAdjust="spacingAndGlyphs">Torque</text>
<text x="1377.24" y="1160.00" font-size="30" font-weight="bold" fill="#3d4148" textLength="86.41" lengthAdjust="spacingAndGlyphs">Rotor</text>
<text x="355.00" y="1677.50" font-size="35" font-weight="bold" fill="#3d4148" textLength="254.21" lengthAdjust="spacingAndGlyphs">Actual Events</text>
<text x="2295.80" y="237.00" font-size="38" font-weight="bold" fill="#3d4148" textLength="275.83" lengthAdjust="spacingAndGlyphs">Turbine state</text>
<text x="2293.52" y="364.00" font-size="38" font-weight="bold" fill="#3d4148" textLength="390.78" lengthAdjust="spacingAndGlyphs">Maintenance mode</text>
<text x="2293.51" y="490.00" font-size="38" font-weight="bold" fill="#3d4148" textLength="263.59" lengthAdjust="spacingAndGlyphs">Repair mode</text>
<text x="2295.80" y="616.60" font-size="38" font-weight="bold" fill="#3d4148" textLength="204.14" lengthAdjust="spacingAndGlyphs">Yaw state</text>
<text x="2297.50" y="742.00" font-size="38" font-weight="bold" fill="#3d4148" textLength="318.76" lengthAdjust="spacingAndGlyphs">Turbine control</text>
<text x="2295.80" y="1133.00" font-size="38" font-weight="bold" fill="#3d4148" textLength="251.53" lengthAdjust="spacingAndGlyphs">Yaw Control</text>
<text x="2294.00" y="1520.50" font-size="38" font-weight="bold" fill="#3d4148" textLength="373.90" lengthAdjust="spacingAndGlyphs">Active token state</text>
<text x="2369.75" y="298.50" font-size="35" font-weight="normal" fill="#3d4047" textLength="228.84" lengthAdjust="spacingAndGlyphs">OTHER STATE</text>
<text x="2436.08" y="424.40" font-size="35" font-weight="normal" fill="#3d4047" textLength="95.33" lengthAdjust="spacingAndGlyphs">invalid</text>
<text x="2436.08" y="550.40" font-size="35" font-weight="normal" fill="#3d4047" textLength="95.33" lengthAdjust="spacingAndGlyphs">invalid</text>
<text x="2405.65" y="677.40" font-size="35" font-weight="normal" fill="#3d4047" textLength="157.98" lengthAdjust="spacingAndGlyphs">A/M STOP</text>
<text x="2350.66" y="814.20" font-size="35.3" font-weight="normal" fill="#ffffff" textLength="70.26" lengthAdjust="spacingAndGlyphs">Start</text>
<text x="2524.56" y="814.20" font-size="35.3" font-weight="normal" fill="#ffffff" textLength="127.46" lengthAdjust="spacingAndGlyphs">Stop/Rst</text>
<text x="2322.09" y="931.90" font-size="35.3" font-weight="normal" fill="#ffffff" textLength="128.52" lengthAdjust="spacingAndGlyphs">Load Off</text>
<text x="2525.31" y="931.90" font-size="35.3" font-weight="normal" fill="#ffffff" textLength="130.11" lengthAdjust="spacingAndGlyphs">Batt Test</text>
<text x="2357.99" y="1050.70" font-size="35.3" font-weight="normal" fill="#ffffff" textLength="55.12" lengthAdjust="spacingAndGlyphs">Idle</text>
<text x="2497.66" y="1050.70" font-size="35.3" font-weight="normal" fill="#ffffff" textLength="181.64" lengthAdjust="spacingAndGlyphs">Close Brake</text>
<text x="2317.10" y="1212.50" font-size="35.3" font-weight="normal" fill="#ffffff" textLength="139.39" lengthAdjust="spacingAndGlyphs">Yaw Auto</text>
<text x="2499.70" y="1212.50" font-size="35.3" font-weight="normal" fill="#ffffff" textLength="180.03" lengthAdjust="spacingAndGlyphs">Yaw Manual</text>
<text x="2342.08" y="1330.60" font-size="35.3" font-weight="normal" fill="#ffffff" textLength="77.79" lengthAdjust="spacingAndGlyphs">CCW</text>
<text x="2557.97" y="1330.60" font-size="35.3" font-weight="normal" fill="#ffffff" textLength="54.69" lengthAdjust="spacingAndGlyphs">CW</text>
<text x="2340.35" y="1447.00" font-size="35.3" font-weight="normal" fill="#ffffff" textLength="87.55" lengthAdjust="spacingAndGlyphs">Stopp</text>
<text x="2322.40" y="1588.40" font-size="34.6" font-weight="normal" fill="#ffffff" textLength="120.81" lengthAdjust="spacingAndGlyphs">AVAILABLE</text>
<text x="2319.68" y="1768.00" font-size="35" font-weight="normal" fill="#ffffff" textLength="125.16" lengthAdjust="spacingAndGlyphs">Request</text>
<text x="2526.07" y="1768.00" font-size="35" font-weight="normal" fill="#ffffff" textLength="123.84" lengthAdjust="spacingAndGlyphs">Release</text>
<text x="410.91" y="1765.80" font-size="29.5" font-weight="normal" fill="#ffffff" textLength="389.88" lengthAdjust="spacingAndGlyphs">Malfunction Cabinet Heaters</text>
<text x="261.79" y="1763.00" font-size="29.5" font-weight="normal" fill="#888888" textLength="30.86" lengthAdjust="spacingAndGlyphs">1.</text>
<text x="366.96" y="1871.50" font-size="29.5" font-weight="normal" fill="#ffffff" textLength="443.07" lengthAdjust="spacingAndGlyphs">Converter communication failure</text>
<text x="261.53" y="1869.50" font-size="29.5" font-weight="normal" fill="#888888" textLength="31.15" lengthAdjust="spacingAndGlyphs">2.</text>
<text x="986.65" y="1765.80" font-size="29.5" font-weight="normal" fill="#ffffff" textLength="498.32" lengthAdjust="spacingAndGlyphs">CCU fault at abnormal grid condition</text>
<text x="916.23" y="1763.00" font-size="29.5" font-weight="normal" fill="#888888" textLength="31.15" lengthAdjust="spacingAndGlyphs">3.</text>
<text x="1164.20" y="1872.00" font-size="29.5" font-weight="normal" fill="#ffffff" textLength="173.72" lengthAdjust="spacingAndGlyphs">Manual Stop</text>
<text x="916.60" y="1869.50" font-size="29.5" font-weight="normal" fill="#888888" textLength="30.74" lengthAdjust="spacingAndGlyphs">4.</text>
<text x="1635.61" y="1765.80" font-size="29.5" font-weight="normal" fill="#ffffff" textLength="517.51" lengthAdjust="spacingAndGlyphs">Demand to stop by an external device</text>
<text x="1570.41" y="1763.00" font-size="29.5" font-weight="normal" fill="#888888" textLength="31.84" lengthAdjust="spacingAndGlyphs">5.</text>
<text x="1756.80" y="1872.00" font-size="29.5" font-weight="normal" fill="#ffffff" textLength="266.67" lengthAdjust="spacingAndGlyphs">Pitch Overrun 0deg</text>
<text x="1570.41" y="1869.50" font-size="29.5" font-weight="normal" fill="#888888" textLength="31.84" lengthAdjust="spacingAndGlyphs">6.</text>
</svg></body></html>
